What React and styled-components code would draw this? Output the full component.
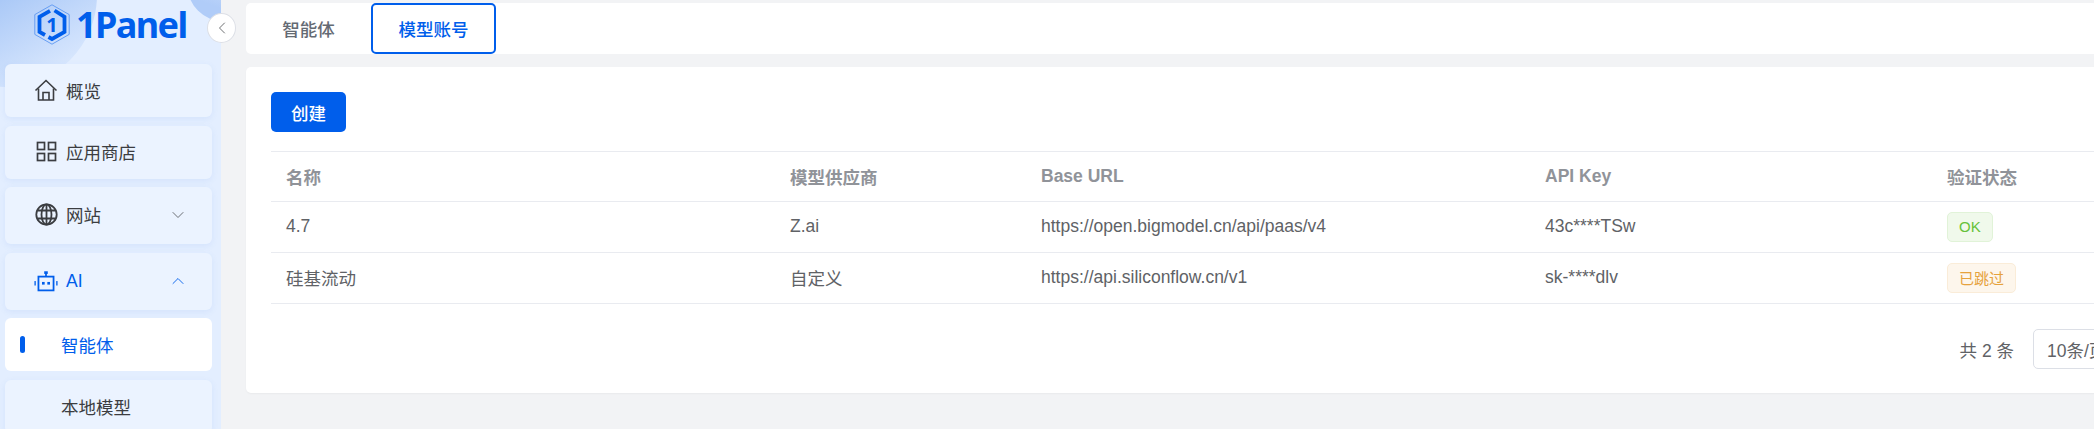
import React from "react";
import styled, { createGlobalStyle } from "styled-components";
import { ChevronDown, ChevronLeft, ChevronRight, ChevronUp } from "lucide-react";

const GlobalStyle = createGlobalStyle`
    html, body {
        margin: 0;
        height: 100%;
        overflow: hidden;
        background: #f2f3f5;
        font-family: "Liberation Sans", "Noto Sans CJK SC", sans-serif;
    }
`;

const Page = styled.div`
    display: flex;
    width: 2323px;
    height: 100vh;
`;

const Sidebar = styled.aside`
    position: relative;
    flex: none;
    width: 221px;
    height: 100%;
    box-sizing: border-box;
    padding: 0 9px 0 5px;
    overflow: hidden;
    background: #e3eeff;

    &::before {
        content: "";
        position: absolute;
        left: -87px;
        top: -97px;
        width: 184px;
        height: 184px;
        border-radius: 50%;
        background: linear-gradient(150deg, #a3c4f6 45%, #e3eeff 95%);
    }

    &::after {
        content: "";
        position: absolute;
        left: 187px;
        top: -54px;
        width: 76px;
        height: 76px;
        border-radius: 50%;
        background: linear-gradient(20deg, #b0ccf8 25%, #e3eeff 85%);
    }
`;

const Brand = styled.div`
    position: relative;
    z-index: 1;
    display: flex;
    align-items: center;
    height: 64px;
    padding: 0 0 16px 29px;
    box-sizing: border-box;
    gap: 6px;
`;

const BrandName = styled.span`
    font-family: "Noto Sans", sans-serif;
    font-weight: 700;
    font-size: 36px;
    letter-spacing: -1.6px;
    color: #005eeb;
`;

const Menu = styled.nav`
    position: relative;
    z-index: 1;
    display: flex;
    flex-direction: column;
    gap: 8.5px;
`;

const MenuRow = styled.div`
    display: flex;
    align-items: center;
    flex: none;
    height: ${(p) => (p.$tall ? 57 : 53)}px;
    box-sizing: border-box;
    padding-left: ${(p) => (p.$sub ? 56 : 29)}px;
    padding-right: 24px;
    padding-bottom: ${(p) => (p.$sub || p.$blue ? 0 : p.$tall ? 2 : 1)}px;
    border-radius: 6px;
    position: relative;
    font-size: 17.5px;
    color: ${(p) => (p.$blue ? "#005eeb" : "#3b3d41")};
    background: ${(p) => (p.$active ? "#fff" : "#ebf3ff")};
    box-shadow: ${(p) => (p.$active ? "none" : "0 2px 6px rgba(90,140,230,0.1)")};
`;

const MenuIcon = styled.span`
    display: flex;
    justify-content: center;
    width: 24px;
    margin-right: 8px;
`;

const MenuArrow = styled.span`
    display: flex;
    margin-left: auto;
    color: ${(p) => (p.$blue ? "#005eeb" : "#5f6368")};
`;

const ActiveMark = styled.i`
    position: absolute;
    left: 15px;
    top: 18px;
    width: 5px;
    height: 17px;
    border-radius: 3px;
    background: #005eeb;
`;

const CollapseButton = styled.button`
    position: absolute;
    left: 207px;
    top: 13px;
    z-index: 3;
    display: flex;
    align-items: center;
    justify-content: center;
    width: 29px;
    height: 30px;
    padding: 0;
    border-radius: 50%;
    border: 1px solid #dcdfe6;
    background: #fff;
    color: #606266;
`;

const Main = styled.main`
    flex: 1;
    min-width: 0;
    padding: 3px 5px 0 25px;
`;

const TabBar = styled.div`
    display: flex;
    height: 51px;
    border-radius: 5px;
    background: #fff;
`;

const Tab = styled.div`
    display: flex;
    align-items: center;
    justify-content: center;
    width: 125px;
    box-sizing: border-box;
    font-size: 17.5px;
    font-weight: 500;
    color: ${(p) => (p.$active ? "#005eeb" : "#646a73")};
    border: ${(p) => (p.$active ? "2px solid #005eeb" : "none")};
    border-radius: 5px;
`;

const Card = styled.section`
    margin-top: 13px;
    padding: 25px 25px 24px;
    height: 326px;
    box-sizing: border-box;
    border-radius: 5px;
    background: #fff;
    box-shadow: 0 1px 2px rgba(0, 0, 0, 0.04);
`;

const CreateButton = styled.button`
    display: block;
    width: 75px;
    height: 40px;
    padding: 0;
    border: none;
    border-radius: 5px;
    background: #005eeb;
    color: #fff;
    font-family: inherit;
    font-size: 17.5px;
    font-weight: 500;
`;

const Table = styled.table`
    width: 100%;
    margin-top: 19px;
    table-layout: fixed;
    border-collapse: collapse;
    border-top: 1px solid #e9ebf0;
    font-size: 17.5px;
`;

const HeadCell = styled.th`
    height: 49px;
    padding: 0 15px;
    text-align: left;
    font-weight: 700;
    color: #909399;
    border-bottom: 1px solid #e9ebf0;
`;

const Cell = styled.td`
    height: 51px;
    padding: 0 15px 1px;
    box-sizing: border-box;
    color: #606266;
    border-bottom: 1px solid #e9ebf0;
`;

const Tag = styled.span`
    display: inline-flex;
    align-items: center;
    height: 30px;
    box-sizing: border-box;
    padding: 0 11px;
    vertical-align: middle;
    border-radius: 5px;
    font-size: 15px;
    border: 1px solid ${(p) => (p.$tone === "ok" ? "#e1f3d8" : "#faecd8")};
    background: ${(p) => (p.$tone === "ok" ? "#f0f9eb" : "#fdf6ec")};
    color: ${(p) => (p.$tone === "ok" ? "#67c23a" : "#e6a23c")};
`;

const Pagination = styled.div`
    display: flex;
    justify-content: flex-end;
    align-items: center;
    gap: 5px;
    margin-top: 25px;
    font-size: 17.5px;
    color: #606266;
`;

const Total = styled.span`
    margin-right: 14px;
`;

const PageSelect = styled.div`
    display: flex;
    align-items: center;
    justify-content: space-between;
    width: 125px;
    height: 40px;
    box-sizing: border-box;
    padding: 0 13px;
    border: 1px solid #dcdfe6;
    border-radius: 5px;
`;

const PageButton = styled.div`
    display: flex;
    align-items: center;
    justify-content: center;
    width: 40px;
    height: 40px;
`;

const columns = ["名称", "模型供应商", "Base URL", "API Key", "验证状态"];

const accounts = [
    { name: "4.7", provider: "Z.ai", url: "https://open.bigmodel.cn/api/paas/v4", key: "43c****TSw", status: "OK", tone: "ok" },
    { name: "硅基流动", provider: "自定义", url: "https://api.siliconflow.cn/v1", key: "sk-****dlv", status: "已跳过", tone: "warn" },
];

const LogoMark = () => (
    <svg width="36" height="41" viewBox="0 0 36 41" fill="none">
        <path d="M18 .8 35.2 10.6V30.4L18 40.2.8 30.4V10.6Z" stroke="#5c97f2" strokeWidth="0.9" />
        <path d="M16 6.800 5.500 12.800V27.800L11 31M20.500 6.500 30.500 12.800V27.800L18 35 14.500 33" stroke="#005eeb" strokeWidth="3.800" />
        <text x="18" y="27.500" textAnchor="middle" fontFamily="Noto Sans, sans-serif" fontWeight="700" fontSize="20" fill="#005eeb">1</text>
    </svg>
);

const HomeIcon = () => (
    <svg width="24" height="24" viewBox="0 0 24 24" fill="none" stroke="#3b3d41" strokeWidth="1.6">
        <path d="M1.5 12.5 12 2.5l10.500 10" />
        <path d="M4.500 10.500V22h15V10.500" />
        <path d="M9 22v-7.500h6V22" />
    </svg>
);

const GridIcon = () => (
    <svg width="21" height="21" viewBox="0 0 21 21" fill="none" stroke="#3b3d41" strokeWidth="1.7">
        <rect x="1.500" y="1.500" width="7" height="7" />
        <rect x="12.500" y="1.500" width="7" height="7" />
        <rect x="1.500" y="12.500" width="7" height="7" />
        <rect x="12.500" y="12.500" width="7" height="7" />
    </svg>
);

const GlobeIcon = () => (
    <svg width="23" height="23" viewBox="0 0 23 23" fill="none" stroke="#3b3d41" strokeWidth="1.800">
        <circle cx="11.500" cy="11.500" r="10.200" />
        <ellipse cx="11.500" cy="11.500" rx="5" ry="10.200" />
        <path d="M11.500 1.300v20.400M2.300 7.500h18.400M2.300 15.500h18.400" />
    </svg>
);

const RobotIcon = () => (
    <svg width="27" height="23" viewBox="0 0 27 23" fill="none">
        <rect x="5" y="6" width="17" height="15.500" stroke="#005eeb" strokeWidth="2" />
        <path d="M13.500 1.500V6" stroke="#005eeb" strokeWidth="2" />
        <rect x="11.500" y="0" width="4" height="3" fill="#005eeb" />
        <rect x="9" y="12" width="3" height="3" fill="#005eeb" />
        <rect x="15" y="12" width="3" height="3" fill="#005eeb" />
        <rect x="0.500" y="11" width="1.500" height="5" fill="#005eeb" />
        <rect x="25" y="11" width="1.500" height="5" fill="#005eeb" />
    </svg>
);

const App = () => (
    <Page>
        <GlobalStyle />
        <Sidebar>
            <Brand>
                <LogoMark />
                <BrandName>1Panel</BrandName>
            </Brand>
            <Menu>
                <MenuRow>
                    <MenuIcon><HomeIcon /></MenuIcon>概览
                </MenuRow>
                <MenuRow>
                    <MenuIcon><GridIcon /></MenuIcon>应用商店
                </MenuRow>
                <MenuRow $tall>
                    <MenuIcon><GlobeIcon /></MenuIcon>网站
                    <MenuArrow><ChevronDown size={20} strokeWidth={1.1} /></MenuArrow>
                </MenuRow>
                <MenuRow $tall $blue>
                    <MenuIcon><RobotIcon /></MenuIcon>AI
                    <MenuArrow $blue><ChevronUp size={20} strokeWidth={1.1} /></MenuArrow>
                </MenuRow>
                <MenuRow $sub $active $blue>
                    <ActiveMark />智能体
                </MenuRow>
                <MenuRow $sub>本地模型</MenuRow>
            </Menu>
        </Sidebar>
        <CollapseButton>
            <ChevronLeft size={20} strokeWidth={1.1} />
        </CollapseButton>
        <Main>
            <TabBar>
                <Tab>智能体</Tab>
                <Tab $active>模型账号</Tab>
            </TabBar>
            <Card>
                <CreateButton>创建</CreateButton>
                <Table>
                    <colgroup>
                        <col width="504" />
                        <col width="251" />
                        <col width="504" />
                        <col width="402" />
                        <col />
                    </colgroup>
                    <thead>
                        <tr>
                            {columns.map((c) => (
                                <HeadCell key={c}>{c}</HeadCell>
                            ))}
                        </tr>
                    </thead>
                    <tbody>
                        {accounts.map((a) => (
                            <tr key={a.name}>
                                <Cell>{a.name}</Cell>
                                <Cell>{a.provider}</Cell>
                                <Cell>{a.url}</Cell>
                                <Cell>{a.key}</Cell>
                                <Cell>
                                    <Tag $tone={a.tone}>{a.status}</Tag>
                                </Cell>
                            </tr>
                        ))}
                    </tbody>
                </Table>
                <Pagination>
                    <Total>共 2 条</Total>
                    <PageSelect>
                        10条/页
                        <ChevronDown size={15} strokeWidth={1.2} />
                    </PageSelect>
                    <PageButton><ChevronLeft size={16} /></PageButton>
                    <PageButton>1</PageButton>
                    <PageButton><ChevronRight size={16} /></PageButton>
                </Pagination>
            </Card>
        </Main>
    </Page>
);

export default App;
